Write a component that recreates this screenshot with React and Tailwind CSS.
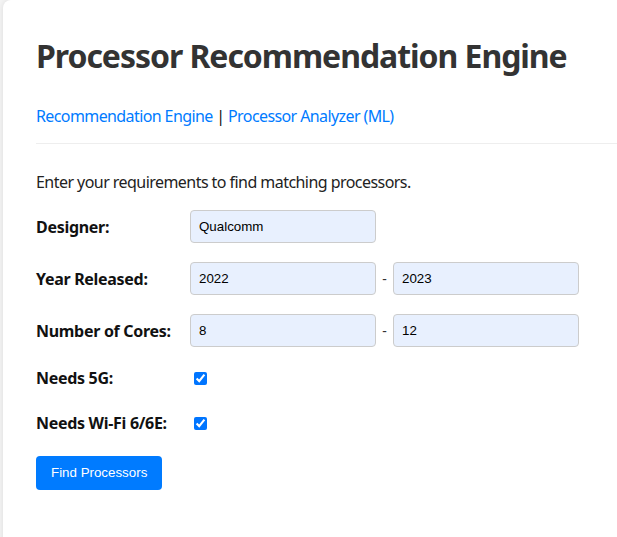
import React from 'react';

function Row({ label, children, gap = 'mb-[19px]' }) {
  return (
    <div className={`flex items-center ${gap}`}>
      <label className="w-[154px] shrink-0 font-bold text-[16px] tracking-[-0.3px] text-[#111]">{label}</label>
      {children}
    </div>
  );
}

function Field({ value }) {
  return (
    <input
      readOnly
      value={value}
      className="w-[186px] h-[33px] px-[8px] rounded-[4px] border border-[#ccc] bg-[#e8f0fe] text-[13.333px] text-black outline-none"
      style={{ fontFamily: '"Liberation Sans", Arial, sans-serif' }}
    />
  );
}

export default function App() {
  return (
    <div className="w-screen h-screen overflow-hidden bg-[#f4f4f4]" style={{ fontFamily: '"Noto Sans", sans-serif' }}>
      <div className="ml-[3px] w-[760px] min-h-[600px] bg-white rounded-lg shadow-[0_0_6px_rgba(0,0,0,0.1)] px-[33px] pt-[36px] text-[#333]">
        <h1 className="text-[32px] font-bold leading-[40px] text-[#333] tracking-[-1.05px]">Processor Recommendation Engine</h1>

        <div className="mt-[28px] text-[16px] leading-[24px] tracking-[-0.6px]">
          <a className="text-[#007bff]" href="#">Recommendation Engine</a>
          <span className="text-[#111]"> | </span>
          <a className="text-[#007bff]" href="#">Processor Analyzer (ML)</a>
        </div>

        <hr className="mt-[15px] border-t border-[#eee]" />

        <p className="mt-[26px] mb-[16px] text-[16px] leading-[24px] tracking-[-0.55px] text-[#222]">Enter your requirements to find matching processors.</p>

        <Row label="Designer:">
          <Field value="Qualcomm" />
        </Row>
        <Row label="Year Released:">
          <Field value="2022" />
          <span className="w-[17px] text-center text-[14px]">-</span>
          <Field value="2023" />
        </Row>
        <Row label="Number of Cores:">
          <Field value="8" />
          <span className="w-[17px] text-center text-[14px]">-</span>
          <Field value="12" />
        </Row>
        <Row label="Needs 5G:" gap="mb-[21px]">
          <input type="checkbox" readOnly checked className="ml-[4px] w-[13px] h-[13px] accent-[#0075ff]" />
        </Row>
        <Row label="Needs Wi-Fi 6/6E:">
          <input type="checkbox" readOnly checked className="ml-[4px] w-[13px] h-[13px] accent-[#0075ff]" />
        </Row>

        <button
          className="mt-[2px] h-[34px] px-[15px] rounded-[4px] bg-[#007bff] text-white text-[13.333px]"
          style={{ fontFamily: '"Liberation Sans", Arial, sans-serif' }}
        >
          Find Processors
        </button>
      </div>
    </div>
  );
}
